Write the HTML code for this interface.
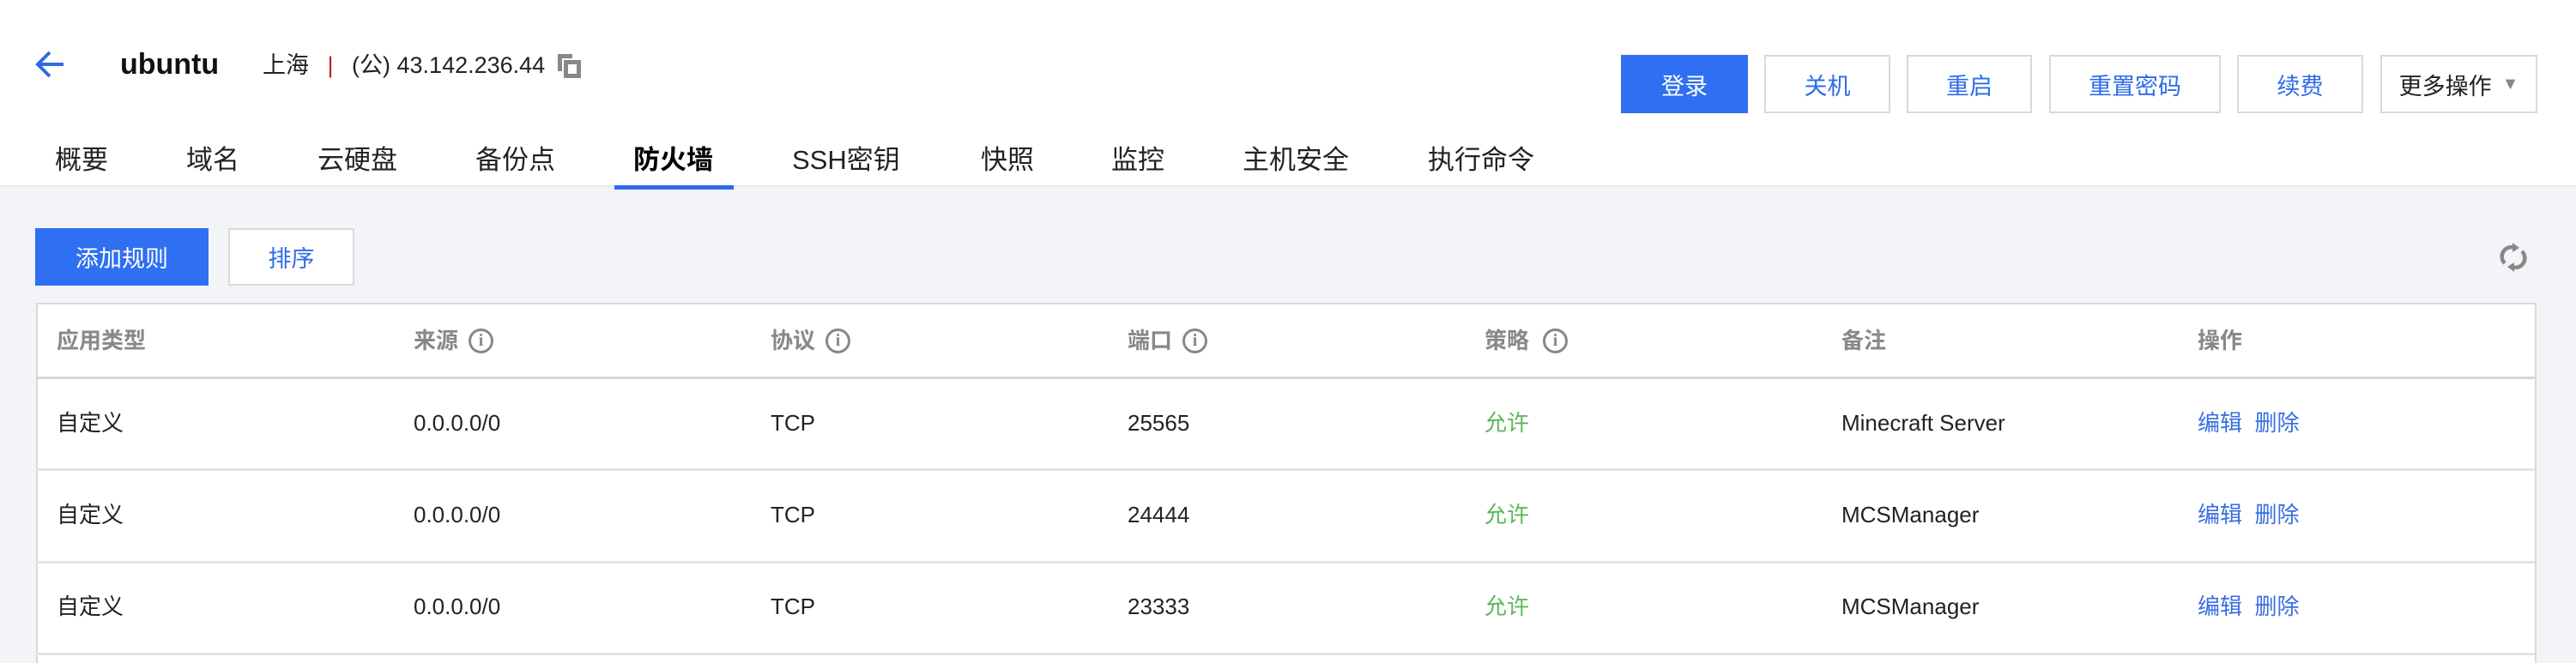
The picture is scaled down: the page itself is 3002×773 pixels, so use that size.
<!DOCTYPE html>
<html><head><meta charset="utf-8"><style>
*{margin:0;padding:0;box-sizing:border-box}
body{width:3002px;height:766px;overflow:hidden;background:#f3f4f7;font-family:"Liberation Sans","Noto Sans CJK SC",sans-serif;position:relative;color:#000}
.abs{position:absolute;white-space:nowrap}
#hdr{position:absolute;left:0;top:0;width:3002px;height:218px;background:#fff;border-bottom:2px solid #e6e8ec}
.btn{position:absolute;top:64px;height:68px;border:2px solid #d9d9d9;background:#fff;color:#2f6be8;font-size:27px;display:flex;align-items:center;justify-content:center}
.tab{position:absolute;top:166px;font-size:31px;color:#222;line-height:42px}
.th{position:absolute;top:380px;font-size:26px;color:#888;font-weight:bold;line-height:34px;display:flex;align-items:center}
.i{display:inline-block;width:29px;height:29px;border:3px solid #888;border-radius:50%;margin-left:12px;font-size:20px;line-height:23px;text-align:center;font-family:"Liberation Serif",serif;font-weight:bold;color:#888}
.td{position:absolute;font-size:26px;line-height:34px;color:#222}
.g{color:#5cb85c}.b{color:#3a6ee0}
.line{position:absolute;left:42px;width:2912px;height:3px;background:#e3e3e3}
</style></head><body>
<div id="hdr"></div>
<svg class="abs" style="left:40px;top:58px" width="36" height="34" viewBox="0 0 36 34"><path d="M18 3 L4 17 L18 31 M4 17 H34" fill="none" stroke="#2f6be8" stroke-width="4"/></svg>
<div class="abs" style="left:140px;top:54px;font-size:34px;font-weight:bold;color:#111;line-height:42px">ubuntu</div>
<div class="abs" style="left:306px;top:58px;font-size:27px;color:#222;line-height:36px">上海 <span style="color:#b22;margin:0 14px">|</span> (公) 43.142.236.44</div>
<svg class="abs" style="left:650px;top:63px" width="27" height="28" viewBox="0 0 27 28"><path d="M2.5 20 V2.5 H17" fill="none" stroke="#888" stroke-width="5"/><rect x="9.5" y="9.5" width="15" height="16" fill="none" stroke="#888" stroke-width="5"/></svg>
<div class="btn" style="left:1889px;width:148px;background:#2f6ff2;border-color:#2f6ff2;color:#fff">登录</div>
<div class="btn" style="left:2056px;width:147px">关机</div>
<div class="btn" style="left:2222px;width:146px">重启</div>
<div class="btn" style="left:2388px;width:200px">重置密码</div>
<div class="btn" style="left:2607px;width:147px">续费</div>
<div class="btn" style="left:2774px;width:183px;color:#222">更多操作<span style="color:#888;font-size:20px;margin-left:12px">▼</span></div>
<div class="tab" style="left:64px">概要</div>
<div class="tab" style="left:217px">域名</div>
<div class="tab" style="left:370px">云硬盘</div>
<div class="tab" style="left:554px">备份点</div>
<div class="tab" style="left:738px;font-weight:bold;color:#000">防火墙</div>
<div class="abs" style="left:716px;top:216px;width:139px;height:5px;background:#2f6be8"></div>
<div class="tab" style="left:923px">SSH密钥</div>
<div class="tab" style="left:1143px">快照</div>
<div class="tab" style="left:1295px">监控</div>
<div class="tab" style="left:1448px">主机安全</div>
<div class="tab" style="left:1664px">执行命令</div>
<div class="btn" style="left:41px;top:266px;width:202px;height:67px;background:#2f6ff2;border-color:#2f6ff2;color:#fff">添加规则</div>
<div class="btn" style="left:266px;top:266px;width:147px;height:67px">排序</div>
<svg class="abs" style="left:2913px;top:282px" width="32" height="36" viewBox="0 0 32 36"><path d="M6 25 A11 11 0 0 1 18 7 M26 11 A11 11 0 0 1 14 29" fill="none" stroke="#888" stroke-width="4.5"/><path d="M15 1 L23 7 L15 12 Z M17 35 L9 29 L17 24 Z" fill="#888"/></svg>
<div class="abs" style="left:42px;top:353px;width:2914px;height:420px;background:#fff;border:2px solid #d9d9d9;border-bottom:none"></div>
<div class="line" style="top:439px;background:#d6d6d6"></div>
<div class="line" style="top:546px"></div>
<div class="line" style="top:654px"></div>
<div class="line" style="top:761px"></div>
<div class="th" style="left:66px">应用类型</div>
<div class="th" style="left:482px">来源<span class="i">i</span></div>
<div class="th" style="left:898px">协议<span class="i">i</span></div>
<div class="th" style="left:1314px">端口<span class="i">i</span></div>
<div class="th" style="left:1730px">策略<span class="i" style="margin-left:16px">i</span></div>
<div class="th" style="left:2146px">备注</div>
<div class="th" style="left:2561px">操作</div>
<div class="td" style="left:66px;top:476px">自定义</div><div class="td" style="left:482px;top:476px">0.0.0.0/0</div><div class="td" style="left:898px;top:476px">TCP</div><div class="td" style="left:1314px;top:476px">25565</div><div class="td g" style="left:1730px;top:476px">允许</div><div class="td" style="left:2146px;top:476px">Minecraft Server</div><div class="td b" style="left:2561px;top:476px">编辑&nbsp; 删除</div>
<div class="td" style="left:66px;top:583px">自定义</div><div class="td" style="left:482px;top:583px">0.0.0.0/0</div><div class="td" style="left:898px;top:583px">TCP</div><div class="td" style="left:1314px;top:583px">24444</div><div class="td g" style="left:1730px;top:583px">允许</div><div class="td" style="left:2146px;top:583px">MCSManager</div><div class="td b" style="left:2561px;top:583px">编辑&nbsp; 删除</div>
<div class="td" style="left:66px;top:690px">自定义</div><div class="td" style="left:482px;top:690px">0.0.0.0/0</div><div class="td" style="left:898px;top:690px">TCP</div><div class="td" style="left:1314px;top:690px">23333</div><div class="td g" style="left:1730px;top:690px">允许</div><div class="td" style="left:2146px;top:690px">MCSManager</div><div class="td b" style="left:2561px;top:690px">编辑&nbsp; 删除</div>
</body></html>
